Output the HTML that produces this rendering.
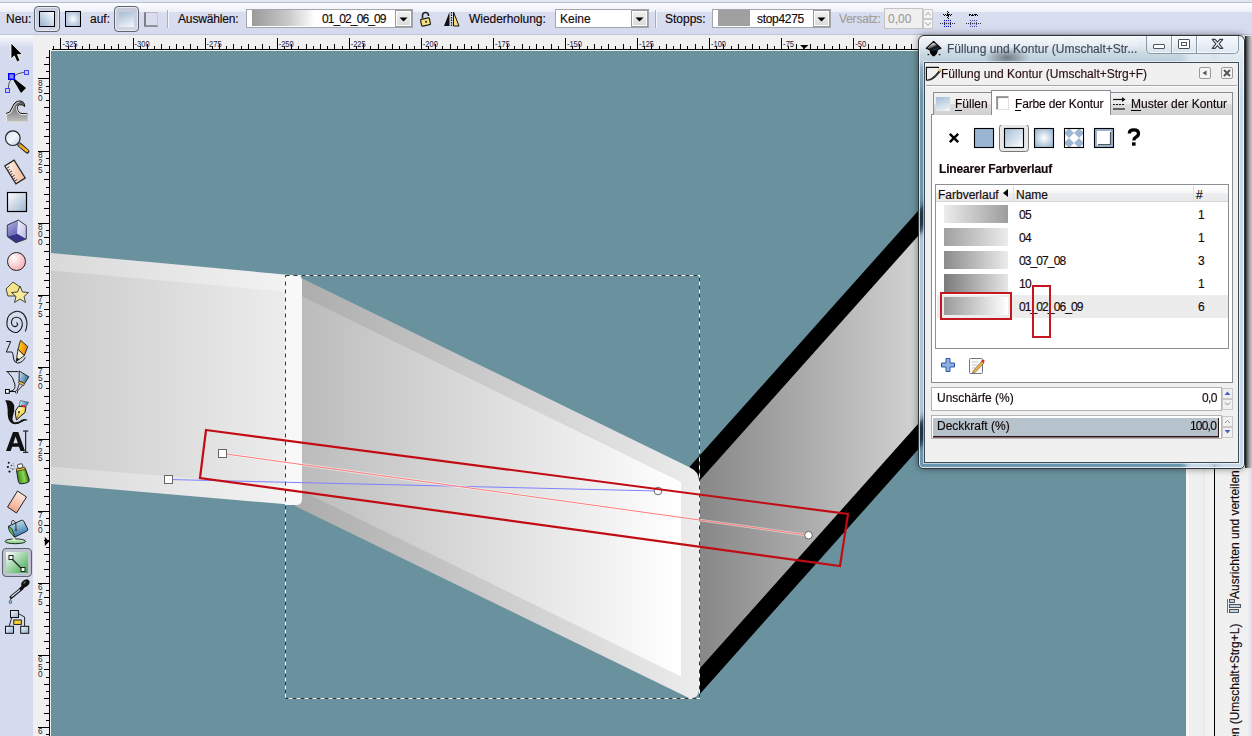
<!DOCTYPE html>
<html><head><meta charset="utf-8">
<style>
*{box-sizing:border-box}
html,body{margin:0;padding:0;width:1252px;height:736px;overflow:hidden;background:#f0f0f0;font-family:"Liberation Sans",sans-serif;font-size:12px;color:#000}
.a{position:absolute}
.lbl{position:absolute;font-size:12px;line-height:14px;white-space:nowrap;color:#140808;-webkit-text-stroke:0.15px currentColor}
</style></head><body>
<!-- top strip -->
<div class="a" style="left:0;top:0;width:1252px;height:3px;background:#e1e6f3;border-bottom:1px solid #b9bfd1"></div>
<!-- toolbar -->
<div id="toolbar" class="a" style="left:0;top:3px;width:1252px;height:32px;background:linear-gradient(#fcfdfe 0px,#f3f5fa 5px,#eceff7 9px,#d8ddef 9px,#d5daee 100%);border-bottom:1px solid #bfc4d6"></div>

<!-- toolbar content -->
<div class="lbl" style="left:6px;top:12px">Neu:</div>
<div class="a" style="left:34px;top:6px;width:26px;height:26px;border:1px solid #5f6473;border-radius:4px;background:linear-gradient(#c5c9d8,#d2d6e6);box-shadow:inset 0 0 0 1px #e6e8f0"></div>
<div class="a" style="left:39px;top:11px;width:16px;height:16px;border:1px solid #000;background:linear-gradient(45deg,#98b2d0,#ffffff)"></div>
<div class="a" style="left:65px;top:11px;width:16px;height:16px;border:1px solid #000;background:radial-gradient(circle at 50% 50%,#ffffff 0,#c9d7e6 50%,#a0b8d2 100%)"></div>
<div class="lbl" style="left:90px;top:12px">auf:</div>
<div class="a" style="left:114px;top:6px;width:25px;height:26px;border:1px solid #5f6473;border-radius:4px;background:linear-gradient(#c5c9d8,#d2d6e6);box-shadow:inset 0 0 0 1px #e6e8f0"></div>
<div class="a" style="left:119px;top:12px;width:15px;height:15px;background:linear-gradient(160deg,#a3bcd6,#f4f7fa)"></div>
<div class="a" style="left:144px;top:12px;width:14px;height:15px;border-top:1px solid #b4b6c0;border-right:1px solid #c4c6d0;border-left:2px solid #7c7e88;border-bottom:2px solid #8e909a;background:#d8dcee"></div>
<div class="a" style="left:167px;top:10px;width:1px;height:18px;background:#a9aebd;box-shadow:1px 0 0 #f5f6fb"></div>
<div class="lbl" style="left:178px;top:12px;letter-spacing:-0.15px">Auswählen:</div>
<div class="a" style="left:246px;top:9px;width:167px;height:19px;border:1px solid #a4a6ad;background:#fff"></div>
<div class="a" style="left:252px;top:10px;width:90px;height:16px;background:linear-gradient(90deg,#9a9a9a,#c8c8c8 40%,#ffffff 70%)"></div>
<div class="lbl" style="left:322px;top:12px;letter-spacing:-0.9px">01_02_06_09</div>
<div class="a" style="left:395px;top:10px;width:17px;height:17px;border:1px solid #9a9a9a;background:linear-gradient(#f2f2f2,#d9d9d9);box-shadow:inset 0 0 0 1px #fff"></div>
<svg class="a" style="left:395px;top:10px" width="17" height="17"><path d="M4.5 7.5h8l-4 4z" fill="#000"/></svg>
<!-- lock -->
<svg class="a" style="left:419px;top:10px" width="15" height="17" viewBox="0 0 15 17"><path d="M3.5 8.5V5.5a3 3 0 0 1 6 0V6" fill="none" stroke="#222" stroke-width="1.6"/><rect x="2" y="8.5" width="9" height="7" rx="1" fill="#f5e07a" stroke="#222" stroke-width="1.2" transform="rotate(-12 6.5 12)"/><circle cx="7" cy="11.8" r="1" fill="#222"/></svg>
<!-- mirror -->
<svg class="a" style="left:443px;top:11px" width="17" height="16" viewBox="0 0 17 16"><path d="M1 15L6.5 1V15Z" fill="#111"/><path d="M8.5 1V15" stroke="#111" stroke-width="1.2" stroke-dasharray="1.5 1"/><path d="M10.5 1L16 15H10.5Z" fill="#f3dc7a" stroke="#111" stroke-width="1"/></svg>
<div class="lbl" style="left:469px;top:12px;letter-spacing:-0.05px">Wiederholung:</div>
<div class="a" style="left:555px;top:9px;width:94px;height:19px;border:1px solid #a4a6ad;background:#fff"></div>
<div class="lbl" style="left:560px;top:12px">Keine</div>
<div class="a" style="left:631px;top:10px;width:17px;height:17px;border:1px solid #9a9a9a;background:linear-gradient(#f2f2f2,#d9d9d9);box-shadow:inset 0 0 0 1px #fff"></div>
<svg class="a" style="left:631px;top:10px" width="17" height="17"><path d="M4.5 7.5h8l-4 4z" fill="#000"/></svg>
<div class="a" style="left:655px;top:10px;width:1px;height:18px;background:#a9aebd;box-shadow:1px 0 0 #f5f6fb"></div>
<div class="lbl" style="left:665px;top:12px">Stopps:</div>
<div class="a" style="left:712px;top:9px;width:119px;height:19px;border:1px solid #a4a6ad;background:#fff"></div>
<div class="a" style="left:718px;top:10px;width:32px;height:16px;background:#a0a0a0"></div>
<div class="lbl" style="left:757px;top:12px;letter-spacing:-0.3px">stop4275</div>
<div class="a" style="left:813px;top:10px;width:17px;height:17px;border:1px solid #9a9a9a;background:linear-gradient(#f2f2f2,#d9d9d9);box-shadow:inset 0 0 0 1px #fff"></div>
<svg class="a" style="left:813px;top:10px" width="17" height="17"><path d="M4.5 7.5h8l-4 4z" fill="#000"/></svg>
<div class="lbl" style="left:839px;top:12px;color:#a39d98;letter-spacing:-0.2px">Versatz:</div>
<div class="a" style="left:884px;top:8px;width:39px;height:21px;border:1px solid #c4c4c4;background:#f0f0f0"></div>
<div class="lbl" style="left:888px;top:12px;color:#a39d98">0,00</div>
<div class="a" style="left:923px;top:9px;width:10px;height:10px;border:1px solid #c9c9c9;background:#f4f4f4"></div>
<div class="a" style="left:923px;top:19px;width:10px;height:10px;border:1px solid #c9c9c9;background:#f4f4f4"></div>
<svg class="a" style="left:923px;top:9px" width="10" height="20"><path d="M2.5 6.5L5 3.5L7.5 6.5M2.5 13.5L5 16.5L7.5 13.5" fill="none" stroke="#a0a0a0" stroke-width="1"/></svg>
<svg class="a" style="left:935px;top:5px" width="52" height="26" viewBox="935 5 52 26" shape-rendering="crispEdges"><rect x="943" y="14" width="1" height="1" fill="#000"/><rect x="944" y="15" width="1" height="1" fill="#000"/><rect x="945" y="14" width="1" height="1" fill="#000"/><rect x="946" y="15" width="1" height="1" fill="#000"/><rect x="947" y="14" width="1" height="1" fill="#000"/><rect x="948" y="15" width="1" height="1" fill="#000"/><rect x="949" y="14" width="1" height="1" fill="#000"/><rect x="950" y="15" width="1" height="1" fill="#000"/><rect x="951" y="14" width="1" height="1" fill="#000"/><rect x="947" y="11" width="1" height="1" fill="#000"/><rect x="948" y="12" width="1" height="1" fill="#000"/><rect x="947" y="13" width="1" height="1" fill="#000"/><rect x="948" y="14" width="1" height="1" fill="#000"/><rect x="947" y="15" width="1" height="1" fill="#000"/><rect x="948" y="16" width="1" height="1" fill="#000"/><rect x="947" y="17" width="1" height="1" fill="#000"/><rect x="948" y="18" width="1" height="1" fill="#000"/><rect x="940" y="23" width="1" height="1" fill="#333"/><rect x="942" y="23" width="1" height="1" fill="#333"/><rect x="944" y="23" width="1" height="1" fill="#333"/><rect x="946" y="23" width="1" height="1" fill="#333"/><rect x="948" y="23" width="1" height="1" fill="#333"/><rect x="950" y="23" width="1" height="1" fill="#333"/><rect x="952" y="23" width="1" height="1" fill="#333"/><rect x="954" y="23" width="1" height="1" fill="#333"/><rect x="966" y="23" width="1" height="1" fill="#333"/><rect x="968" y="23" width="1" height="1" fill="#333"/><rect x="970" y="23" width="1" height="1" fill="#333"/><rect x="972" y="23" width="1" height="1" fill="#333"/><rect x="974" y="23" width="1" height="1" fill="#333"/><rect x="976" y="23" width="1" height="1" fill="#333"/><rect x="978" y="23" width="1" height="1" fill="#333"/><rect x="980" y="23" width="1" height="1" fill="#333"/><rect x="944" y="20" width="1" height="1" fill="#0000c0"/><rect x="944" y="26" width="1" height="1" fill="#0000c0"/><rect x="944" y="20" width="1" height="1" fill="#0000c0"/><rect x="950" y="20" width="1" height="1" fill="#0000c0"/><rect x="946" y="20" width="1" height="1" fill="#0000c0"/><rect x="946" y="26" width="1" height="1" fill="#0000c0"/><rect x="944" y="22" width="1" height="1" fill="#0000c0"/><rect x="950" y="22" width="1" height="1" fill="#0000c0"/><rect x="948" y="20" width="1" height="1" fill="#0000c0"/><rect x="948" y="26" width="1" height="1" fill="#0000c0"/><rect x="944" y="24" width="1" height="1" fill="#0000c0"/><rect x="950" y="24" width="1" height="1" fill="#0000c0"/><rect x="950" y="20" width="1" height="1" fill="#0000c0"/><rect x="950" y="26" width="1" height="1" fill="#0000c0"/><rect x="944" y="26" width="1" height="1" fill="#0000c0"/><rect x="950" y="26" width="1" height="1" fill="#0000c0"/><rect x="945" y="21" width="1" height="1" fill="#b8bce8"/><rect x="945" y="23" width="1" height="1" fill="#b8bce8"/><rect x="945" y="25" width="1" height="1" fill="#b8bce8"/><rect x="946" y="22" width="1" height="1" fill="#b8bce8"/><rect x="946" y="24" width="1" height="1" fill="#b8bce8"/><rect x="947" y="21" width="1" height="1" fill="#b8bce8"/><rect x="947" y="23" width="1" height="1" fill="#b8bce8"/><rect x="947" y="25" width="1" height="1" fill="#b8bce8"/><rect x="948" y="22" width="1" height="1" fill="#b8bce8"/><rect x="948" y="24" width="1" height="1" fill="#b8bce8"/><rect x="949" y="21" width="1" height="1" fill="#b8bce8"/><rect x="949" y="23" width="1" height="1" fill="#b8bce8"/><rect x="949" y="25" width="1" height="1" fill="#b8bce8"/><rect x="970" y="20" width="1" height="1" fill="#4848a8"/><rect x="970" y="26" width="1" height="1" fill="#4848a8"/><rect x="970" y="20" width="1" height="1" fill="#4848a8"/><rect x="976" y="20" width="1" height="1" fill="#4848a8"/><rect x="972" y="20" width="1" height="1" fill="#4848a8"/><rect x="972" y="26" width="1" height="1" fill="#4848a8"/><rect x="970" y="22" width="1" height="1" fill="#4848a8"/><rect x="976" y="22" width="1" height="1" fill="#4848a8"/><rect x="974" y="20" width="1" height="1" fill="#4848a8"/><rect x="974" y="26" width="1" height="1" fill="#4848a8"/><rect x="970" y="24" width="1" height="1" fill="#4848a8"/><rect x="976" y="24" width="1" height="1" fill="#4848a8"/><rect x="976" y="20" width="1" height="1" fill="#4848a8"/><rect x="976" y="26" width="1" height="1" fill="#4848a8"/><rect x="970" y="26" width="1" height="1" fill="#4848a8"/><rect x="976" y="26" width="1" height="1" fill="#4848a8"/><rect x="971" y="21" width="1" height="1" fill="#b8bce8"/><rect x="971" y="23" width="1" height="1" fill="#b8bce8"/><rect x="971" y="25" width="1" height="1" fill="#b8bce8"/><rect x="972" y="22" width="1" height="1" fill="#b8bce8"/><rect x="972" y="24" width="1" height="1" fill="#b8bce8"/><rect x="973" y="21" width="1" height="1" fill="#b8bce8"/><rect x="973" y="23" width="1" height="1" fill="#b8bce8"/><rect x="973" y="25" width="1" height="1" fill="#b8bce8"/><rect x="974" y="22" width="1" height="1" fill="#b8bce8"/><rect x="974" y="24" width="1" height="1" fill="#b8bce8"/><rect x="975" y="21" width="1" height="1" fill="#b8bce8"/><rect x="975" y="23" width="1" height="1" fill="#b8bce8"/><rect x="975" y="25" width="1" height="1" fill="#b8bce8"/><rect x="969" y="15" width="1" height="1" fill="#000"/><rect x="969" y="14" width="1" height="1" fill="#000"/><rect x="970" y="14" width="1" height="1" fill="#000"/><rect x="971" y="15" width="1" height="1" fill="#000"/><rect x="972" y="14" width="1" height="1" fill="#000"/><rect x="972" y="15" width="1" height="1" fill="#000"/><rect x="973" y="15" width="1" height="1" fill="#000"/><rect x="974" y="14" width="1" height="1" fill="#000"/><rect x="975" y="15" width="1" height="1" fill="#000"/><rect x="975" y="14" width="1" height="1" fill="#000"/><rect x="976" y="14" width="1" height="1" fill="#000"/><rect x="977" y="15" width="1" height="1" fill="#000"/></svg>
<!-- toolbox -->
<div id="toolbox" class="a" style="left:0;top:35px;width:33px;height:701px;background:linear-gradient(#fafbfd 0px,#dde1f1 10px,#d5dbee 12px,#d5dbee 100%)"></div>

<svg class="a" style="left:0;top:0" width="34" height="736" viewBox="0 0 34 736">
 <defs>
  <linearGradient id="iRect" x1="0" y1="0" x2="1" y2="1"><stop offset="0" stop-color="#ffffff"/><stop offset="1" stop-color="#9db5d0"/></linearGradient>
  <radialGradient id="iCirc" cx="0.35" cy="0.3" r="0.8"><stop offset="0" stop-color="#fff"/><stop offset="1" stop-color="#f4a8b0"/></radialGradient>
  <linearGradient id="iGreen" x1="0" y1="0" x2="1" y2="1"><stop offset="0" stop-color="#ffffff"/><stop offset="1" stop-color="#3aa84a"/></linearGradient>
  <linearGradient id="iBox" x1="0" y1="0" x2="1" y2="1"><stop offset="0" stop-color="#c8c8ee"/><stop offset="1" stop-color="#4a4a98"/></linearGradient>
 </defs>
 <!-- arrow -->
 <path d="M11 43V59L14.3 55.8L17 62L20 60.5L17.4 54.6H22.5Z" fill="#000" stroke="#fff" stroke-width="0.8" stroke-linejoin="round"/>
 <!-- node -->
 <path d="M8 90Q8 74 25 72" fill="none" stroke="#555" stroke-width="1"/>
 <path d="M11 76L26 88L21 93Z" fill="#000"/>
 <rect x="8.7" y="73.7" width="5.6" height="5.6" fill="#8a8ae8" stroke="#0000ff" stroke-width="1.4"/>
 <rect x="24.5" y="70.5" width="4" height="4" fill="#c8c8ff" stroke="#4040ff"/>
 <rect x="5.5" y="88.5" width="4" height="4" fill="#c8c8ff" stroke="#4040ff"/>
 <!-- tweak -->
 <linearGradient id="iTw" x1="0" y1="0" x2="0" y2="1"><stop offset="0" stop-color="#5c5c5c"/><stop offset="0.5" stop-color="#8e8e8e"/><stop offset="1" stop-color="#c4c4c4"/></linearGradient>
 <path d="M6 113.5Q10 113.5 12 108Q14.5 101 19.5 101Q24.5 101 24.8 106.5L22 104.8Q19 103.8 17.5 106.5Q16.8 111.5 21 113.5L27.5 113.8V122.5H6Z" fill="url(#iTw)"/><path d="M6 113.5Q10 113.5 12 108Q14.5 101 19.5 101Q24.5 101 24.8 106.5L22 104.8Q19 103.8 17.5 106.5Q16.8 111.5 21 113.5L27.5 113.8" fill="none" stroke="#111" stroke-width="1"/>
 <path d="M7 114.3Q11 114.3 13 108.5Q15.2 102 19.5 102M16.8 106Q15.8 112 20.8 114.5H27" fill="none" stroke="#fff" stroke-width="0.8"/>
 <path d="M6.5 122H27M6.5 114V122" stroke="#f4f4f4" stroke-width="0.8"/>
 <!-- zoom -->
 <linearGradient id="iLens" x1="0" y1="0" x2="1" y2="1"><stop offset="0" stop-color="#c8dcf0"/><stop offset="0.5" stop-color="#f4f8fc"/><stop offset="1" stop-color="#b8d0e8"/></linearGradient>
 <linearGradient id="iMs" x1="0" y1="0" x2="1" y2="1"><stop offset="0" stop-color="#fff8f4"/><stop offset="1" stop-color="#f4b898"/></linearGradient>
 <path d="M19.3 144.5L27.2 151.3" stroke="#222" stroke-width="4.4" stroke-linecap="round"/>
 <path d="M20.2 145.4L27 151" stroke="#f4b020" stroke-width="2.6" stroke-linecap="round"/>
 <path d="M18.2 143.3L20 145" stroke="#888" stroke-width="2.5"/>
 <circle cx="12.8" cy="138.2" r="7.3" fill="url(#iLens)" stroke="#222" stroke-width="1.2"/>
 <!-- measure -->
 <g transform="rotate(-32 15 172)"><rect x="9.5" y="161.5" width="11" height="21" fill="url(#iMs)" stroke="#222" stroke-width="1.2"/><path d="M10 164.5h3M10 167h2M10 169.5h3M10 172h2M10 174.5h3M10 177h2M10 179.5h3" stroke="#222" stroke-width="0.8"/></g>
 <!-- rect -->
 <rect x="7.5" y="192.5" width="19" height="19" fill="url(#iRect)" stroke="#000" stroke-width="1.2"/>
 <!-- 3d box -->
 <linearGradient id="iB1" x1="0" y1="0" x2="0.4" y2="1"><stop offset="0" stop-color="#b4b4e4"/><stop offset="1" stop-color="#6a6ab8"/></linearGradient>
 <linearGradient id="iB2" x1="0" y1="0" x2="1" y2="1"><stop offset="0" stop-color="#f4f4ff"/><stop offset="1" stop-color="#b8b8e8"/></linearGradient>
 <path d="M7.3 225L18.3 220.1L17.2 233.8L7.3 236.6Z" fill="url(#iB1)"/>
 <path d="M18.3 220.1L26.3 225.6L26.3 239L17.2 233.8Z" fill="url(#iB2)"/>
 <path d="M7.3 236.6L17.2 233.8L26.3 239L15.9 242.7Z" fill="#34348a"/>
 <path d="M7.3 225L18.3 220.1L26.3 225.6L26.3 239L15.9 242.7L7.3 236.6Z" fill="none" stroke="#3a3a4a" stroke-width="1"/>
 <!-- circle -->
 <circle cx="16.5" cy="261.5" r="9" fill="url(#iCirc)" stroke="#222" stroke-width="1"/>
 <!-- star -->
 <path d="M6 289L13 282L20 287L17 296L8 296Z" fill="#f6e48a" stroke="#333" stroke-width="0.9"/>
 <path d="M20 286L22.5 292L28.5 292.5L24 296.5L25.5 302.5L20 299L14.5 302.5L16 296.5L11.5 292.5L17.5 292Z" fill="#f8ec9a" stroke="#333" stroke-width="0.9"/>
 <!-- spiral -->
 <path d="M16.4 322.4C16.6 322.8 17.9 323.8 17.7 324.5C17.5 325.2 15.9 326.5 15 326.6C14.1 326.7 12.8 325.8 12.2 325C11.6 324.2 11.4 323.1 11.5 322C11.6 320.9 12.0 319.4 12.8 318.6C13.6 317.8 14.9 317.2 16.1 317.2C17.4 317.2 19.3 317.6 20.3 318.6C21.3 319.6 22.1 321.4 22.3 323C22.5 324.6 22.1 326.7 21.3 328.2C20.5 329.7 18.9 331.6 17.4 332.2C15.8 332.8 13.7 332.4 12 331.5C10.3 330.6 8.3 328.6 7.5 327C6.7 325.4 6.8 323.9 7 322C7.2 320.1 7.4 317.3 9 315.5C10.6 313.7 14.3 311.6 16.7 311.3C19.1 311.1 21.8 312.3 23.5 314C25.2 315.7 26.3 319.1 26.8 321.4C27.3 323.6 26.8 325.8 26.5 327.5C26.2 329.2 25.5 330.8 25.3 331.5" fill="none" stroke="#1a1a1a" stroke-width="1.1"/>
 <!-- pencil -->
 <linearGradient id="iPc" x1="0" y1="0" x2="1" y2="0.3"><stop offset="0" stop-color="#f8e010"/><stop offset="1" stop-color="#f08010"/></linearGradient>
 <path d="M6.3 341.5H10.7L6.3 352H12Q13.4 354 13.4 358Q13.8 362.5 17.7 363.2Q22.6 362.5 25.4 357.4" fill="none" stroke="#1a1a1a" stroke-width="1"/>
 <path d="M20.5 340.3L27.8 346.5L24.2 355.7L18 349.2Z" fill="url(#iPc)" stroke="#1a1a1a" stroke-width="0.9"/>
 <path d="M18 349.2L24.2 355.7L16.2 361.5Z" fill="#fff4d0" stroke="#1a1a1a" stroke-width="0.9"/>
 <path d="M16.2 361.5L17.3 357.8L19.5 359.2Z" fill="#111"/>
 <!-- pen -->
 <linearGradient id="iPn" x1="0" y1="0" x2="1" y2="0.4"><stop offset="0" stop-color="#c8e8f0"/><stop offset="1" stop-color="#3a70a0"/></linearGradient>
 <path d="M6.3 371.6H18.5M7.5 371.8Q13.5 377 14.8 384Q15.8 389.5 12 390.8Q10 391.4 8.7 391.6" fill="none" stroke="#1a1a1a" stroke-width="1"/>
 <path d="M19.3 371L28.8 376.8L24.6 383.6L19 380.8Z" fill="url(#iPn)" stroke="#1a1a1a" stroke-width="0.9"/>
 <path d="M19 380.8L24.6 383.6L23.5 385.8L18.5 383Z" fill="#f4c840" stroke="#1a1a1a" stroke-width="0.7"/>
 <path d="M19.2 384L17 390.5M22.5 385.5L17.6 391" stroke="#1a1a1a" stroke-width="0.9"/>
 <rect x="5.5" y="389.5" width="3.8" height="3.8" fill="#fff" stroke="#000" stroke-width="1"/>
 <path d="M9.3 391.5H15.5" stroke="#000" stroke-width="0.9"/>
 <circle cx="16.5" cy="392" r="1.2" fill="#fff" stroke="#000" stroke-width="0.8"/>
 <!-- calligraphy -->
 <linearGradient id="iNib" x1="0" y1="0" x2="1" y2="1"><stop offset="0" stop-color="#ffffff"/><stop offset="0.6" stop-color="#f4d84a"/><stop offset="1" stop-color="#e8b820"/></linearGradient>
 <linearGradient id="iCap" x1="0" y1="0" x2="1" y2="0"><stop offset="0" stop-color="#c0e8f0"/><stop offset="1" stop-color="#3a78b0"/></linearGradient>
 <path d="M5.2 400.3Q12.5 399.5 14.2 405.5Q15 411 12.8 416.5Q11.8 421 14.5 422.2Q19 422.6 22 419.6Q25 418 28 420.2Q24.5 420 21.8 422Q17 425.2 12.5 423.8Q7.8 421.5 7.7 414Q7.9 405 5.2 400.3Z" fill="#111"/>
 <path d="M18.5 406.4L25.9 406.8L25 412.5Q21 415.5 16.5 420Q15 415 15.7 410.5Z" fill="url(#iNib)" stroke="#111" stroke-width="1"/>
 <circle cx="19" cy="412" r="0.9" fill="#111"/><path d="M19 412.5L17 418.5" stroke="#333" stroke-width="0.5"/>
 <path d="M20.1 400.5L28.7 402.3L25.9 406.8L19.3 406Z" fill="url(#iCap)" stroke="#333" stroke-width="0.5"/>
 <path d="M21 405.8L25.5 406.4" stroke="#d82020" stroke-width="1.6"/>
 <!-- text -->
 <path d="M6 451L13 432H18.3L25 451H20.5L19 446.8H12.2L10.7 451ZM13.3 443.2H17.9L15.6 436.5Z" fill="#111"/>
 <path d="M23 431H28.3M25.7 431V452.3M23 452.3H28.3" stroke="#000" stroke-width="1"/>
 <!-- spray -->
 <linearGradient id="iSp" x1="0" y1="0" x2="1" y2="0"><stop offset="0" stop-color="#3a8a20"/><stop offset="0.6" stop-color="#8ad850"/><stop offset="1" stop-color="#2a6a10"/></linearGradient>
 <g transform="translate(0.5,-1.5) rotate(-12 22 476)">
  <path d="M17 471H26L27.5 482Q27.5 485 24.5 485H19.5Q16.5 485 16.5 482Z" fill="url(#iSp)" stroke="#1a1a1a" stroke-width="0.9"/>
  <rect x="17.2" y="469.2" width="8.6" height="2.4" fill="#f0c030" stroke="#1a1a1a" stroke-width="0.6"/>
  <rect x="19" y="465.3" width="5" height="4" rx="1" fill="#fff" stroke="#1a1a1a" stroke-width="0.8"/>
 </g>
 <circle cx="8.7" cy="462.8" r="1" fill="#111"/><circle cx="7.9" cy="467" r="1.1" fill="#111"/><circle cx="9.5" cy="471.6" r="1.1" fill="#111"/>
 <circle cx="11.5" cy="465.5" r="0.8" fill="#333"/><circle cx="12.8" cy="469.2" r="0.8" fill="#444"/><circle cx="10.9" cy="468.3" r="0.6" fill="#555"/>
 <circle cx="14" cy="465.8" r="0.6" fill="#777"/><circle cx="14.8" cy="468.3" r="0.5" fill="#888"/><circle cx="13.3" cy="463.8" r="0.5" fill="#666"/>
 <!-- eraser -->
 <linearGradient id="iEr" x1="0.7" y1="0" x2="0.3" y2="1"><stop offset="0" stop-color="#fdf0e8"/><stop offset="1" stop-color="#f0a080"/></linearGradient><path d="M17.5 491L26.5 497L16.5 513L7.5 507Z" fill="url(#iEr)" stroke="#222" stroke-width="1" stroke-linejoin="round"/>
 <!-- bucket -->
 <linearGradient id="iBk" x1="0" y1="0" x2="0.3" y2="1"><stop offset="0" stop-color="#d4f0f4"/><stop offset="1" stop-color="#3a78b0"/></linearGradient>
 <linearGradient id="iPd" x1="0" y1="0" x2="0" y2="1"><stop offset="0" stop-color="#e8f8e8"/><stop offset="1" stop-color="#70c870"/></linearGradient>
 <ellipse cx="15.4" cy="541.3" rx="10.3" ry="2.4" fill="url(#iPd)" stroke="#111" stroke-width="0.9"/>
 <path d="M12.5 536.5Q13 539 12.2 540.5H15.5Q14.5 539 14.8 536.8Z" fill="#d8f0d8"/>
 <path d="M8.5 526.3L21.3 520.3Q23 520 24 521.5L27.7 529Q28.2 530.5 26.5 531.3L14.6 537.2Z" fill="url(#iBk)" stroke="#111" stroke-width="0.9"/>
 <path d="M8.5 526.3Q8 528.5 10 532L14.6 537.2Q14 533 12 529.5Q10.5 527 8.5 526.3Z" fill="#60c060" stroke="#111" stroke-width="0.8"/>
 <path d="M11.2 524.5Q11.5 520 13 520.2Q14.5 520.5 15.8 523.5L16 530" fill="none" stroke="#111" stroke-width="0.8"/>
 <circle cx="16" cy="530.2" r="0.9" fill="#888" stroke="#111" stroke-width="0.5"/>
 <!-- gradient selected -->
 <rect x="2.5" y="548.5" width="29" height="28" rx="4" fill="#c0c4d2" stroke="#5e626e" stroke-width="1.1"/>
 <rect x="6" y="552" width="22" height="21" fill="url(#iGreen)"/>
 <path d="M11 558L23 570" stroke="#222" stroke-width="1.3"/>
 <rect x="9" y="555.5" width="4" height="4" fill="#fff" stroke="#222" stroke-width="1"/>
 <rect x="21" y="567.5" width="4" height="4" fill="#fff" stroke="#222" stroke-width="1"/>
 <!-- dropper -->
 <linearGradient id="iCb" x1="0" y1="0" x2="1" y2="1"><stop offset="0" stop-color="#f4f8fc"/><stop offset="1" stop-color="#8ab0d0"/></linearGradient>
 <path d="M11.2 597.2L22 588.2" stroke="#111" stroke-width="3.2" stroke-linecap="round"/>
 <path d="M11.8 596.6L21.5 588.6" stroke="#c8e0f4" stroke-width="1.3" stroke-linecap="round"/>
 <rect x="19" y="585.6" width="7.5" height="3" rx="1" fill="#111" transform="rotate(-42 22.7 587.1)"/>
 <ellipse cx="25.4" cy="583.3" rx="4.6" ry="3.3" fill="#111" transform="rotate(-42 25.4 583.3)"/>
 <ellipse cx="24.6" cy="582.6" rx="1.6" ry="0.7" fill="#777" transform="rotate(-42 24.6 582.6)"/>
 <path d="M10.6 599Q8.6 601.8 9.2 603Q10.4 604.5 11.6 603Q12 601.5 10.6 599Z" fill="#8ab8e0" stroke="#333" stroke-width="0.6"/>
 <!-- connector -->
 <path d="M18.5 613.6L24.6 617V626M11.8 617.4L9.2 626" fill="none" stroke="#111" stroke-width="0.9"/>
 <rect x="10.5" y="610.5" width="8" height="7" fill="url(#iCb)" stroke="#111" stroke-width="1"/>
 <rect x="13.8" y="620" width="7.5" height="4.4" fill="#f8d030" stroke="#111" stroke-width="0.9"/>
 <rect x="5.5" y="626.3" width="8" height="7" fill="url(#iCb)" stroke="#111" stroke-width="1"/>
 <rect x="20.7" y="626.3" width="8" height="7" fill="url(#iCb)" stroke="#111" stroke-width="1"/>
</svg>
<!-- rulers + canvas svg -->
<svg class="a" style="left:0;top:0" width="1252" height="736" viewBox="0 0 1252 736">
 <rect x="33" y="35" width="1219" height="16" fill="#f0f0f0"/>
 <rect x="33" y="35" width="18" height="701" fill="#f0f0f0"/>
 <path d="M52 49.5H1252M49.5 50V736" stroke="#000" stroke-width="1"/>
 <path d="M53.5 46V49M60.5 38V49M68.5 46V49M75.5 44V49M82.5 46V49M89.5 44V49M97.5 46V49M104.5 44V49M111.5 46V49M118.5 44V49M125.5 46V49M133.5 38V49M140.5 46V49M147.5 44V49M154.5 46V49M161.5 44V49M169.5 46V49M176.5 44V49M183.5 46V49M190.5 44V49M197.5 46V49M205.5 38V49M212.5 46V49M219.5 44V49M226.5 46V49M233.5 44V49M241.5 46V49M248.5 44V49M255.5 46V49M262.5 44V49M269.5 46V49M277.5 38V49M284.5 46V49M291.5 44V49M298.5 46V49M306.5 44V49M313.5 46V49M320.5 44V49M327.5 46V49M334.5 44V49M342.5 46V49M349.5 38V49M356.5 46V49M363.5 44V49M370.5 46V49M378.5 44V49M385.5 46V49M392.5 44V49M399.5 46V49M406.5 44V49M414.5 46V49M421.5 38V49M428.5 46V49M435.5 44V49M442.5 46V49M450.5 44V49M457.5 46V49M464.5 44V49M471.5 46V49M478.5 44V49M486.5 46V49M493.5 38V49M500.5 46V49M507.5 44V49M514.5 46V49M522.5 44V49M529.5 46V49M536.5 44V49M543.5 46V49M551.5 44V49M558.5 46V49M565.5 38V49M572.5 46V49M579.5 44V49M587.5 46V49M594.5 44V49M601.5 46V49M608.5 44V49M615.5 46V49M623.5 44V49M630.5 46V49M637.5 38V49M644.5 46V49M651.5 44V49M659.5 46V49M666.5 44V49M673.5 46V49M680.5 44V49M687.5 46V49M695.5 44V49M702.5 46V49M709.5 38V49M716.5 46V49M723.5 44V49M731.5 46V49M738.5 44V49M745.5 46V49M752.5 44V49M759.5 46V49M767.5 44V49M774.5 46V49M781.5 38V49M788.5 46V49M796.5 44V49M803.5 46V49M810.5 44V49M817.5 46V49M824.5 44V49M832.5 46V49M839.5 44V49M846.5 46V49M853.5 38V49M860.5 46V49M868.5 44V49M875.5 46V49M882.5 44V49M889.5 46V49M896.5 44V49M904.5 46V49M911.5 44V49M918.5 46V49M925.5 38V49M932.5 46V49M940.5 44V49M947.5 46V49M954.5 44V49M961.5 46V49M968.5 44V49M976.5 46V49M983.5 44V49M990.5 46V49M997.5 38V49M1004.5 46V49M1012.5 44V49M1019.5 46V49M1026.5 44V49M1033.5 46V49M1041.5 44V49M1048.5 46V49M1055.5 44V49M1062.5 46V49M1069.5 38V49M1077.5 46V49M1084.5 44V49M1091.5 46V49M1098.5 44V49M1105.5 46V49M1113.5 44V49M1120.5 46V49M1127.5 44V49M1134.5 46V49M1141.5 38V49M1149.5 46V49M1156.5 44V49M1163.5 46V49M1170.5 44V49M1177.5 46V49M1185.5 44V49M1192.5 46V49M1199.5 44V49M1206.5 46V49M1213.5 38V49M1221.5 46V49M1228.5 44V49M1235.5 46V49M1242.5 44V49M1249.5 46V49M46 57.5H49M44 64.5H49M46 71.5H49M38 78.5H49M46 86.5H49M44 93.5H49M46 100.5H49M44 107.5H49M46 115.5H49M44 122.5H49M46 129.5H49M44 136.5H49M46 143.5H49M38 151.5H49M46 158.5H49M44 165.5H49M46 172.5H49M44 179.5H49M46 187.5H49M44 194.5H49M46 201.5H49M44 208.5H49M46 215.5H49M38 223.5H49M46 230.5H49M44 237.5H49M46 244.5H49M44 251.5H49M46 259.5H49M44 266.5H49M46 273.5H49M44 280.5H49M46 287.5H49M38 295.5H49M46 302.5H49M44 309.5H49M46 316.5H49M44 324.5H49M46 331.5H49M44 338.5H49M46 345.5H49M44 352.5H49M46 360.5H49M38 367.5H49M46 374.5H49M44 381.5H49M46 388.5H49M44 396.5H49M46 403.5H49M44 410.5H49M46 417.5H49M44 424.5H49M46 432.5H49M38 439.5H49M46 446.5H49M44 453.5H49M46 460.5H49M44 468.5H49M46 475.5H49M44 482.5H49M46 489.5H49M44 496.5H49M46 504.5H49M38 511.5H49M46 518.5H49M44 525.5H49M46 532.5H49M44 540.5H49M46 547.5H49M44 554.5H49M46 561.5H49M44 569.5H49M46 576.5H49M38 583.5H49M46 590.5H49M44 597.5H49M46 605.5H49M44 612.5H49M46 619.5H49M44 626.5H49M46 633.5H49M44 641.5H49M46 648.5H49M38 655.5H49M46 662.5H49M44 669.5H49M46 677.5H49M44 684.5H49M46 691.5H49M44 698.5H49M46 705.5H49M44 713.5H49M46 720.5H49M38 727.5H49M46 734.5H49" stroke="#000" stroke-width="1"/>
 <path d="M800 45H808.5L804.2 49Z M44.8 537V546L49.3 541.5Z" fill="#000"/>
 <g font-family="Liberation Sans" font-size="9" fill="#202040"><text x="62.5" y="47" textLength="15" lengthAdjust="spacingAndGlyphs">-325</text><text x="134.6" y="47" textLength="15" lengthAdjust="spacingAndGlyphs">-300</text><text x="206.6" y="47" textLength="15" lengthAdjust="spacingAndGlyphs">-275</text><text x="278.7" y="47" textLength="15" lengthAdjust="spacingAndGlyphs">-250</text><text x="350.7" y="47" textLength="15" lengthAdjust="spacingAndGlyphs">-225</text><text x="422.8" y="47" textLength="15" lengthAdjust="spacingAndGlyphs">-200</text><text x="494.9" y="47" textLength="15" lengthAdjust="spacingAndGlyphs">-175</text><text x="566.9" y="47" textLength="15" lengthAdjust="spacingAndGlyphs">-150</text><text x="639.0" y="47" textLength="15" lengthAdjust="spacingAndGlyphs">-125</text><text x="711.0" y="47" textLength="15" lengthAdjust="spacingAndGlyphs">-100</text><text x="783.1" y="47" textLength="11" lengthAdjust="spacingAndGlyphs">-75</text><text x="855.2" y="47" textLength="11" lengthAdjust="spacingAndGlyphs">-50</text><text x="927.2" y="47" textLength="11" lengthAdjust="spacingAndGlyphs">-25</text><text x="38" y="85.7" textLength="4.6" lengthAdjust="spacingAndGlyphs">8</text><text x="38" y="93.2" textLength="4.6" lengthAdjust="spacingAndGlyphs">5</text><text x="38" y="100.7" textLength="4.6" lengthAdjust="spacingAndGlyphs">0</text><text x="38" y="157.8" textLength="4.6" lengthAdjust="spacingAndGlyphs">8</text><text x="38" y="165.3" textLength="4.6" lengthAdjust="spacingAndGlyphs">2</text><text x="38" y="172.8" textLength="4.6" lengthAdjust="spacingAndGlyphs">5</text><text x="38" y="229.8" textLength="4.6" lengthAdjust="spacingAndGlyphs">8</text><text x="38" y="237.3" textLength="4.6" lengthAdjust="spacingAndGlyphs">0</text><text x="38" y="244.8" textLength="4.6" lengthAdjust="spacingAndGlyphs">0</text><text x="38" y="301.9" textLength="4.6" lengthAdjust="spacingAndGlyphs">7</text><text x="38" y="309.4" textLength="4.6" lengthAdjust="spacingAndGlyphs">7</text><text x="38" y="316.9" textLength="4.6" lengthAdjust="spacingAndGlyphs">5</text><text x="38" y="373.9" textLength="4.6" lengthAdjust="spacingAndGlyphs">7</text><text x="38" y="381.4" textLength="4.6" lengthAdjust="spacingAndGlyphs">5</text><text x="38" y="388.9" textLength="4.6" lengthAdjust="spacingAndGlyphs">0</text><text x="38" y="446.0" textLength="4.6" lengthAdjust="spacingAndGlyphs">7</text><text x="38" y="453.5" textLength="4.6" lengthAdjust="spacingAndGlyphs">2</text><text x="38" y="461.0" textLength="4.6" lengthAdjust="spacingAndGlyphs">5</text><text x="38" y="518.1" textLength="4.6" lengthAdjust="spacingAndGlyphs">7</text><text x="38" y="525.6" textLength="4.6" lengthAdjust="spacingAndGlyphs">0</text><text x="38" y="533.1" textLength="4.6" lengthAdjust="spacingAndGlyphs">0</text><text x="38" y="590.1" textLength="4.6" lengthAdjust="spacingAndGlyphs">6</text><text x="38" y="597.6" textLength="4.6" lengthAdjust="spacingAndGlyphs">7</text><text x="38" y="605.1" textLength="4.6" lengthAdjust="spacingAndGlyphs">5</text><text x="38" y="662.2" textLength="4.6" lengthAdjust="spacingAndGlyphs">6</text><text x="38" y="669.7" textLength="4.6" lengthAdjust="spacingAndGlyphs">5</text><text x="38" y="677.2" textLength="4.6" lengthAdjust="spacingAndGlyphs">0</text><text x="38" y="734.2" textLength="4.6" lengthAdjust="spacingAndGlyphs">6</text><text x="38" y="741.7" textLength="4.6" lengthAdjust="spacingAndGlyphs">2</text><text x="38" y="749.2" textLength="4.6" lengthAdjust="spacingAndGlyphs">5</text></g>
 <rect x="51" y="51" width="1135" height="685" fill="#6a929e"/>

 <defs>
  <clipPath id="cv"><rect x="51" y="51" width="1135" height="685"/></clipPath>
  <linearGradient id="gBeamR" gradientUnits="userSpaceOnUse" x1="699" y1="0" x2="918" y2="0"><stop offset="0" stop-color="#878787"/><stop offset="1" stop-color="#d2d2d2"/></linearGradient>
  <linearGradient id="gMidO" gradientUnits="userSpaceOnUse" x1="300" y1="0" x2="699" y2="0"><stop offset="0" stop-color="#adadad"/><stop offset="1" stop-color="#ececec"/></linearGradient>
  <linearGradient id="gMidI" gradientUnits="userSpaceOnUse" x1="302" y1="0" x2="681" y2="0"><stop offset="0" stop-color="#bcbcbc"/><stop offset="1" stop-color="#ffffff"/></linearGradient>
  <linearGradient id="gLO" gradientUnits="userSpaceOnUse" x1="51" y1="0" x2="290" y2="0"><stop offset="0" stop-color="#d9d9d9"/><stop offset="1" stop-color="#f3f3f3"/></linearGradient>
  <linearGradient id="gLI" gradientUnits="userSpaceOnUse" x1="51" y1="0" x2="290" y2="0"><stop offset="0" stop-color="#cbcbcb"/><stop offset="1" stop-color="#ededed"/></linearGradient>
 </defs>
 <g clip-path="url(#cv)">
  <!-- right beam -->
  <polygon points="684,473.1 960,164 960,402.6 699,694.9 699,490" fill="#000"/>
  <polygon points="699,481.3 960,189 960,377 699,669.3" fill="url(#gBeamR)"/>
  <!-- middle shape -->
  <path d="M296,275.5 L690,467.5 Q699,472 699,480 L699,689 Q699,699 689,698 L295,506 Z" fill="url(#gMidO)"/>
  <polygon points="302,296.2 681,482 681,676.4 302,491" fill="url(#gMidI)"/>
  <!-- left shape -->
  <polygon points="40,252 290,275 295,505 40,483" fill="url(#gLO)"/>
  <polygon points="40,269.5 290,292 290,486.2 40,465.8" fill="url(#gLI)"/>
  <path d="M285,275 H297 Q302,275 302,281 V499 Q302,505 296,505 H285 Z" fill="#f8f8f8"/>
  <!-- selection bbox -->
  <rect x="285.5" y="275.5" width="414" height="423" fill="none" stroke="#fff" stroke-width="1"/>
  <rect x="285.5" y="275.5" width="414" height="423" fill="none" stroke="#333" stroke-width="1" stroke-dasharray="4 4"/>
  <!-- gradient lines -->
  <line x1="168.5" y1="479.5" x2="658" y2="491" stroke="#8080ff" stroke-width="1"/>
  <line x1="222.5" y1="453.5" x2="808.5" y2="535.2" stroke="#fff" stroke-opacity="0.55" stroke-width="2.6"/><line x1="222.5" y1="453.5" x2="808.5" y2="535.2" stroke="#ff7a7a" stroke-width="1"/>
  <rect x="164.5" y="475.5" width="8" height="8" fill="#fff" stroke="#666" stroke-width="1"/>
  <rect x="218.5" y="449.5" width="8" height="8" fill="#fff" stroke="#666" stroke-width="1"/>
  <circle cx="658" cy="491" r="3.8" fill="#fff" stroke="#666" stroke-width="1"/>
  <circle cx="808.5" cy="535.2" r="3.8" fill="#fff" stroke="#666" stroke-width="1"/>
  <!-- red annotation -->
  <polygon points="206,430 848,514 840,566 200,478" fill="none" stroke="#c20c14" stroke-width="2.2"/>
 </g>
</svg>

<!-- scrollbar + dock panel -->
<div class="a" style="left:1186px;top:51px;width:28px;height:685px;background:linear-gradient(90deg,#f7f7f7 0,#f7f7f7 3px,#e9e9e9 3px,#f0f0f0 4px,#eeeeee 17px,#e6e6e6 18px,#f0f0f0 19px,#f3f3f3 100%)"></div>
<div class="a" style="left:1214px;top:35px;width:1px;height:701px;background:#000"></div>
<div class="a" style="left:1215px;top:35px;width:37px;height:701px;background:#f0f0f0"></div>
<div class="a" style="left:1247px;top:35px;width:5px;height:701px;background:linear-gradient(90deg,#f4f4f6,#dadce6)"></div>
<div class="lbl" style="left:1228px;top:599px;transform-origin:0 0;transform:rotate(-90deg);line-height:14px">Ausrichten und verteilen</div>
<div class="lbl" style="left:1228px;top:741px;transform-origin:0 0;transform:rotate(-90deg);line-height:14px">en (Umschalt+Strg+L)</div>
<svg class="a" style="left:1226px;top:598px" width="16" height="17" viewBox="0 0 16 17"><path d="M1.5 1V15" stroke="#d84040" stroke-width="1"/><rect x="3.5" y="1.5" width="5" height="3" fill="#c0d4e8" stroke="#444" stroke-width="0.9"/><rect x="3.5" y="6.5" width="11" height="3" fill="#c0d4e8" stroke="#444" stroke-width="0.9"/><rect x="3.5" y="11.5" width="9" height="3" fill="#c0d4e8" stroke="#444" stroke-width="0.9"/></svg>

<!-- dialog -->
<div class="a" style="left:1245px;top:36px;width:7px;height:432px;background:linear-gradient(90deg,#1e2226 0,#3a3c40 1px,#707070 2px,#b4b4b8 5px,#c4c8d6 7px)"></div>
<div id="dlg" class="a" style="left:918px;top:35px;width:327px;height:434px;border:1px solid #2e353d;border-radius:6px 6px 5px 5px;background:linear-gradient(rgba(242,247,252,0.88) 0,rgba(232,240,247,0.82) 12px,rgba(212,226,238,0.78) 25px,rgba(190,212,232,0.45) 32px,rgba(110,165,220,0.3) 60px,rgba(110,165,220,0.3) 100%);backdrop-filter:blur(3px);box-shadow:inset 0 0 0 1px rgba(255,255,255,0.75),0 0 7px rgba(0,0,0,0.45)"></div>
<div class="a" style="left:984px;top:47px;width:46px;height:15px;background:radial-gradient(ellipse at 50% 70%,rgba(30,34,40,0.5),rgba(30,34,40,0) 70%)"></div>
<svg class="a" style="left:922px;top:38px" width="24" height="22" viewBox="922 38 24 22"><defs><linearGradient id="ink" x1="0.2" y1="0" x2="0.8" y2="1"><stop offset="0" stop-color="#fff"/><stop offset="0.35" stop-color="#bbb"/><stop offset="0.6" stop-color="#111"/><stop offset="1" stop-color="#2a5aa0"/></linearGradient></defs><path d="M933.6 41.3L941 48.3L933.6 51.5L926.2 48.3Z" fill="url(#ink)" stroke="#000" stroke-width="1.1" stroke-linejoin="round"/><path d="M929.5 50Q933.6 52.5 938 50L937 53.5L934.5 56.3H932.7L930.3 53.5Z" fill="#000"/><rect x="927.6" y="54" width="1.6" height="1.2" fill="#111"/><rect x="938.8" y="54" width="1.6" height="1.2" fill="#111"/></svg>
<div class="lbl" style="left:947px;top:42px;color:#3c4a5e">Füllung und Kontur (Umschalt+Str...</div>
<!-- caption buttons -->
<div class="a" style="left:1146px;top:36px;width:93px;height:18px;border:1px solid #8a98a8;border-top:none;border-radius:0 0 5px 5px;background:linear-gradient(rgba(255,255,255,0.35),rgba(220,232,242,0.6));box-shadow:inset 0 -1px 0 rgba(255,255,255,0.7)"></div>
<div class="a" style="left:1171px;top:36px;width:1px;height:17px;background:#8a98a8;box-shadow:1px 0 0 rgba(255,255,255,0.6)"></div>
<div class="a" style="left:1196px;top:36px;width:1px;height:17px;background:#8a98a8;box-shadow:1px 0 0 rgba(255,255,255,0.6)"></div>
<div class="a" style="left:1153px;top:44px;width:12px;height:5px;border:1px solid #4a5460;border-radius:1px;background:#fff"></div>
<div class="a" style="left:1178px;top:39px;width:12px;height:10px;border:1px solid #4a5460;border-radius:1px;background:#fff;box-shadow:inset 0 0 0 1px #fff"></div>
<div class="a" style="left:1181px;top:42px;width:6px;height:4px;border:1px solid #4a5460"></div>
<svg class="a" style="left:1205px;top:34px" width="25" height="20" viewBox="1205 34 25 20"><polygon points="1212.2,39.4 1215.1,39.4 1217.5,42.1 1219.9,39.4 1222.8,39.4 1219.1,43.9 1222.8,48.4 1219.9,48.4 1217.5,45.7 1215.1,48.4 1212.2,48.4 1215.9,43.9" fill="#f6f6f6" stroke="#363e4c" stroke-width="1.1" stroke-linejoin="round"/></svg>
<!-- client -->
<div class="a" style="left:924px;top:62px;width:315px;height:401px;border:1px solid #3e4a56;background:#f0f0f0;box-shadow:0 0 0 1px rgba(255,255,255,0.55)"></div>
<svg class="a" style="left:924px;top:64px" width="18" height="18" viewBox="924 64 18 18"><path d="M926.5 80.5V67.5H939" fill="none" stroke="#111" stroke-width="1.3"/><path d="M927.5 68.5H938M927.5 68.5V79" stroke="#fff" stroke-width="0.8"/><path d="M926.8 80.3Q931 79.5 935 75.5L939.8 69.8L940.5 71.5L936 76.5Q931.5 81 926.8 80.3Z" fill="#333" stroke="#111" stroke-width="0.6"/><path d="M938.3 70L940.5 68L940.2 72.5Z" fill="#f8c820"/></svg>
<div class="lbl" style="left:941px;top:67px;color:#2a1010">Füllung und Kontur (Umschalt+Strg+F)</div>
<div class="a" style="left:1199px;top:67px;width:12px;height:12px;border:1px solid #9a9a9a;border-radius:2px;background:#f4f4f4"></div>
<svg class="a" style="left:1199px;top:67px" width="12" height="12"><path d="M3.5 6L7.5 3.5V8.5Z" fill="#555"/></svg>
<div class="a" style="left:1221px;top:67px;width:12px;height:12px;border:1px solid #9a9a9a;border-radius:2px;background:#f4f4f4"></div>
<svg class="a" style="left:1221px;top:67px" width="12" height="12"><path d="M3 3L9 9M9 3L3 9" stroke="#555" stroke-width="2"/></svg>
<div class="a" style="left:926px;top:85px;width:311px;height:1px;background:#a6a6a6;box-shadow:0 1px 0 #fff"></div>
<!-- tabs -->
<div class="a" style="left:931px;top:114px;width:302px;height:269px;border:1px solid #898c95;background:#fff"></div>
<div class="a" style="left:933px;top:92px;width:59px;height:23px;border:1px solid #898c95;border-bottom:none;background:linear-gradient(#f2f2f2,#ebebeb 50%,#dddddd 51%,#cfcfcf)"></div>
<div class="a" style="left:1110px;top:92px;width:123px;height:23px;border:1px solid #898c95;border-bottom:none;background:linear-gradient(#f2f2f2,#ebebeb 50%,#dddddd 51%,#cfcfcf)"></div>
<div class="a" style="left:991px;top:90px;width:120px;height:25px;border:1px solid #898c95;border-bottom:none;background:#fff"></div>
<div class="a" style="left:936px;top:97px;width:14px;height:14px;background:linear-gradient(160deg,#a3bcd6,#f4f7fa)"></div>
<div class="lbl" style="left:955px;top:97px">Füllen</div>
<div class="a" style="left:955px;top:110px;width:7px;height:1px;background:#000"></div>
<div class="a" style="left:996px;top:96px;width:13px;height:14px;border:1px solid #a0a0a0;border-right-color:#e0e0e0;border-bottom-color:#e0e0e0;box-shadow:inset 1px 1px 1px #888"></div>
<div class="lbl" style="left:1015px;top:97px;letter-spacing:-0.15px">Farbe der Kontur</div>
<div class="a" style="left:1015px;top:110px;width:6px;height:1px;background:#000"></div>
<svg class="a" style="left:1112px;top:95px" width="16" height="16" viewBox="0 0 16 16"><path d="M1 4.5H12" stroke="#111" stroke-width="1.2"/><path d="M10 2L13.5 4.5L10 7Z" fill="#111"/><path d="M1 9.5H13" stroke="#111" stroke-width="1" stroke-dasharray="2 1"/><path d="M1 14H13" stroke="#333" stroke-width="1.4"/></svg>
<div class="lbl" style="left:1131px;top:97px">Muster der Kontur</div>
<div class="a" style="left:1131px;top:110px;width:10px;height:1px;background:#000"></div>
<!-- paint type icons -->
<svg class="a" style="left:945px;top:125px" width="200" height="30" viewBox="945 125 200 30">
 <defs>
  <linearGradient id="pl" x1="0" y1="0" x2="1" y2="1"><stop offset="0" stop-color="#a3bcd6"/><stop offset="1" stop-color="#ffffff"/></linearGradient>
  <radialGradient id="pr" cx="0.5" cy="0.5" r="0.6"><stop offset="0" stop-color="#fff"/><stop offset="1" stop-color="#99b5d2"/></radialGradient>
  <pattern id="pp" width="10" height="10" patternUnits="userSpaceOnUse" x="1064" y="128"><rect width="10" height="10" fill="#fff"/><path d="M5 0L10 5L5 10L0 5Z" fill="#9db7d3"/></pattern>
 </defs>
 <path d="M949.8 133.8L958.2 142.2M958.2 133.8L949.8 142.2" stroke="#000" stroke-width="2.4"/>
 <rect x="974.5" y="128.5" width="19" height="19" fill="#99b5d2" stroke="#000" stroke-width="1.1"/>
 <rect x="999.5" y="124.5" width="29" height="27" rx="3" fill="#e8e8e8" stroke="#787878" stroke-width="1"/>
 <rect x="1004.5" y="128.5" width="19" height="19" fill="url(#pl)" stroke="#000" stroke-width="1.1"/>
 <rect x="1034.5" y="128.5" width="19" height="19" fill="url(#pr)" stroke="#000" stroke-width="1.1"/>
 <rect x="1064.5" y="128.5" width="19" height="19" fill="url(#pp)" stroke="#000" stroke-width="1.1"/>
 <rect x="1094.5" y="128.5" width="19" height="19" fill="#99b5d2" stroke="#000" stroke-width="1.1"/>
 <rect x="1097" y="131" width="14" height="14" fill="#fff"/>
 <path d="M1110.5 132V144.5H1098" fill="none" stroke="#555" stroke-width="1.2"/>
 <path d="M1129.3 133.5Q1129.3 129.8 1133.8 129.8Q1138.5 129.8 1138.5 133.5Q1138.5 135.8 1135.8 137.2Q1133.8 138.3 1133.8 140.5" fill="none" stroke="#000" stroke-width="3.3"/><rect x="1132" y="142.3" width="3.6" height="3.4" fill="#000"/>
</svg>
<div class="lbl" style="left:939px;top:162px;font-weight:bold;letter-spacing:-0.15px">Linearer Farbverlauf</div>
<!-- gradient list -->
<div class="a" style="left:935px;top:184px;width:294px;height:165px;border:1px solid #8e8f94;background:#fff"></div>
<div class="a" style="left:936px;top:185px;width:292px;height:17px;background:linear-gradient(#ffffff,#f7f7f8 50%,#eceef0 51%,#e8e9eb);border-bottom:1px solid #d5d5d5"></div>
<div class="a" style="left:1013px;top:186px;width:1px;height:15px;background:#e0e0e0"></div>
<div class="a" style="left:1193px;top:186px;width:1px;height:15px;background:#e0e0e0"></div>
<div class="lbl" style="left:938px;top:188px">Farbverlauf</div>
<svg class="a" style="left:1002px;top:188px" width="8" height="10"><path d="M6 1V9L1 5Z" fill="#000"/></svg>
<div class="lbl" style="left:1016px;top:188px">Name</div>
<div class="lbl" style="left:1196px;top:188px">#</div>
<div class="a" style="left:937px;top:295px;width:291px;height:23px;background:#ececec"></div>
<div class="a" style="left:944px;top:205px;width:64px;height:18px;background:linear-gradient(90deg,#ececec,#9c9c9c)"></div>
<div class="a" style="left:944px;top:228px;width:64px;height:18px;background:linear-gradient(90deg,#a0a0a0,#ececec)"></div>
<div class="a" style="left:944px;top:251px;width:64px;height:18px;background:linear-gradient(90deg,#8a8a8a,#ececec)"></div>
<div class="a" style="left:944px;top:274px;width:64px;height:18px;background:linear-gradient(90deg,#7a7a7a,#e6e6e6)"></div>
<div class="a" style="left:944px;top:297px;width:64px;height:18px;background:linear-gradient(90deg,#9a9a9a,#ffffff)"></div>
<div class="lbl" style="left:1019px;top:208px;letter-spacing:-0.6px">05</div>
<div class="lbl" style="left:1019px;top:231px;letter-spacing:-0.6px">04</div>
<div class="lbl" style="left:1019px;top:254px;letter-spacing:-0.9px">03_07_08</div>
<div class="lbl" style="left:1019px;top:277px;letter-spacing:-0.6px">10</div>
<div class="lbl" style="left:1019px;top:300px;letter-spacing:-0.9px">01_02_06_09</div>
<div class="lbl" style="left:1198px;top:208px">1</div>
<div class="lbl" style="left:1198px;top:231px">1</div>
<div class="lbl" style="left:1198px;top:254px">3</div>
<div class="lbl" style="left:1198px;top:277px">1</div>
<div class="lbl" style="left:1198px;top:300px">6</div>
<div class="a" style="left:940px;top:292px;width:72px;height:28px;border:2px solid #c41820"></div>
<div class="a" style="left:1032px;top:285px;width:19px;height:53px;border:2px solid #c41820"></div>
<svg class="a" style="left:940px;top:357px" width="16" height="16" viewBox="0 0 16 16"><path d="M6 1.5H10V6H14.5V10H10V14.5H6V10H1.5V6H6Z" fill="#8fb0e0" stroke="#2a5aa8" stroke-width="1"/></svg>
<svg class="a" style="left:968px;top:357px" width="18" height="18" viewBox="0 0 18 18"><rect x="1.5" y="1.5" width="13" height="15" rx="1" fill="#fafafa" stroke="#777" stroke-width="1"/><path d="M4 5H10M4 8H9M4 11H8" stroke="#bbb" stroke-width="0.8"/><path d="M5 14L14 4L16 6L7 15.5L4.5 16Z" fill="#f0b040" stroke="#555" stroke-width="0.6"/><circle cx="15" cy="4" r="1.6" fill="#d03030"/></svg>
<!-- spin boxes -->
<div class="a" style="left:931px;top:387px;width:291px;height:24px;border:1px solid #b4b4b4;background:#fff"></div>
<div class="lbl" style="left:937px;top:391px">Unschärfe (%)</div>
<div class="lbl" style="left:1202px;top:391px;letter-spacing:-0.6px">0,0</div>
<div class="a" style="left:1222px;top:388px;width:11px;height:11px;border:1px solid #c8c8c8;background:#f0f0f0"></div>
<div class="a" style="left:1222px;top:399px;width:11px;height:11px;border:1px solid #c8c8c8;background:#f0f0f0"></div>
<svg class="a" style="left:1222px;top:388px" width="11" height="22"><path d="M2.5 7L5.5 3.5L8.5 7Z" fill="#4a60c0"/><path d="M3 14.5L5.5 17L8 14.5" fill="none" stroke="#909090" stroke-width="1"/></svg>
<div class="a" style="left:931px;top:415px;width:291px;height:24px;border:1px solid #b4b4b4;background:#fff"></div>
<div class="a" style="left:933px;top:418px;width:286px;height:19px;background:#b7c3cc;border-bottom:1px solid #2a1414;border-right:1px solid #2a1414;box-shadow:0 1px 0 #8a7070"></div>
<div class="lbl" style="left:937px;top:419px">Deckkraft (%)</div>
<div class="lbl" style="left:1190px;top:419px;letter-spacing:-0.8px">100,0</div>
<div class="a" style="left:1222px;top:416px;width:11px;height:11px;border:1px solid #c8c8c8;background:#f0f0f0"></div>
<div class="a" style="left:1222px;top:427px;width:11px;height:11px;border:1px solid #c8c8c8;background:#f0f0f0"></div>
<svg class="a" style="left:1222px;top:416px" width="11" height="22"><path d="M3 7L5.5 4.5L8 7" fill="none" stroke="#909090" stroke-width="1"/><path d="M2.5 14L5.5 17.5L8.5 14Z" fill="#4a60c0"/></svg>
</body></html>
